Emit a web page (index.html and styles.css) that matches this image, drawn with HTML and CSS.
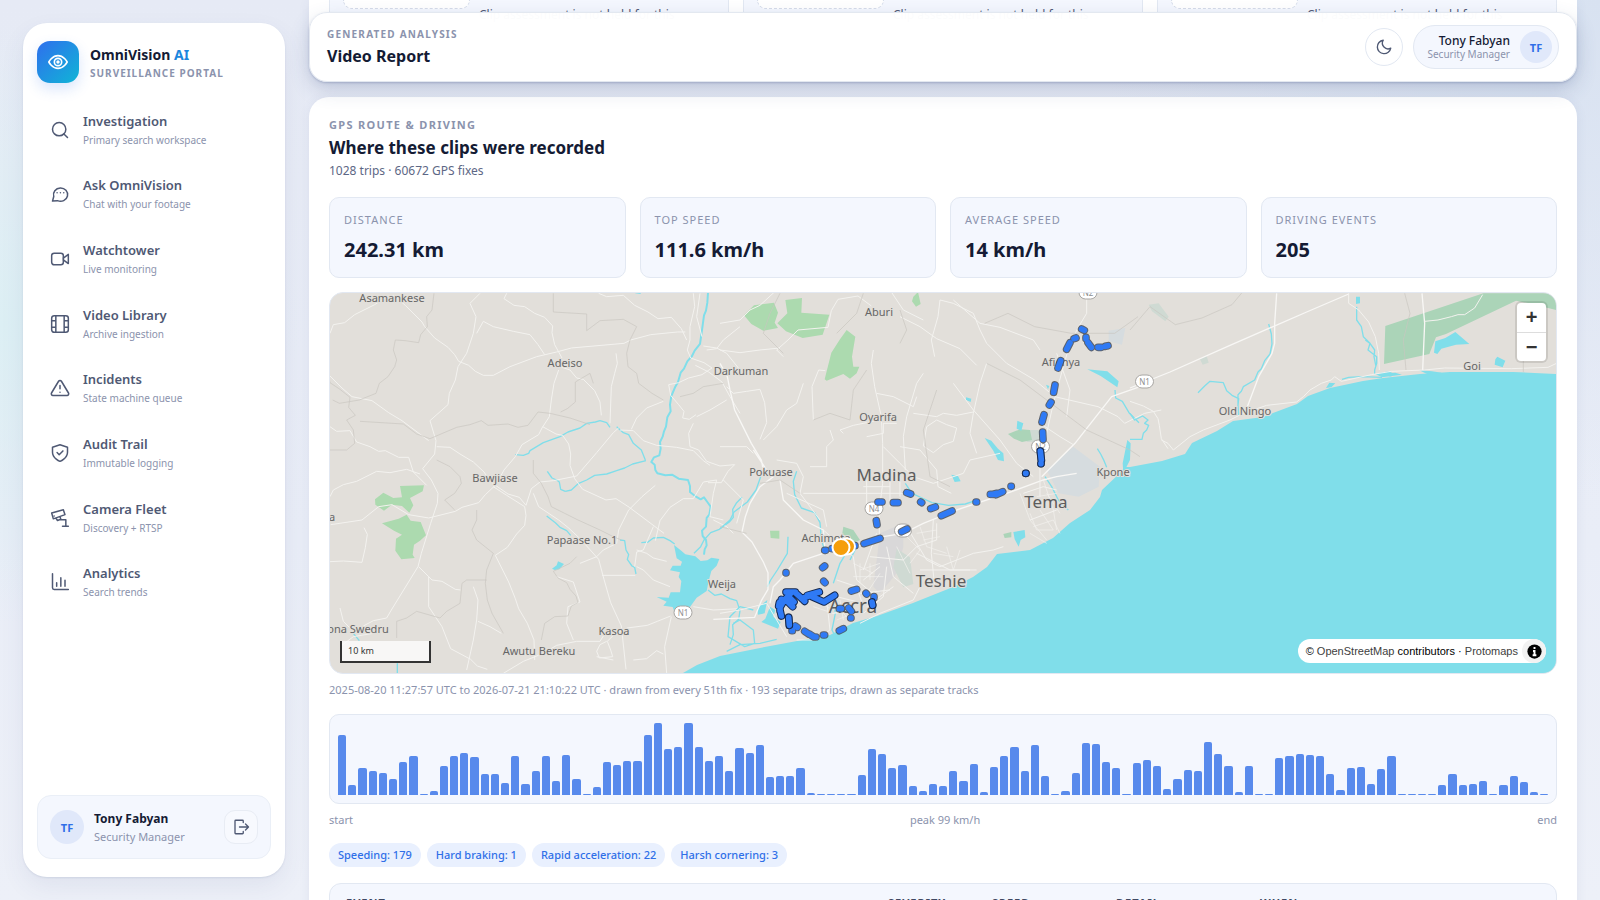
FILE: index.html
```html
<!DOCTYPE html>
<html lang="en">
<head>
<meta charset="utf-8">
<meta name="viewport" content="width=device-width, initial-scale=1">
<title>OmniVision AI – Video Report</title>
<link rel="stylesheet" href="styles.css">
</head>
<body>
<div class="shell">
  <aside class="sidebar">
    <div class="brand">
      <span class="brand-mark"><svg class="icon icon-lg" viewBox="0 0 24 24"><path d="M2 12s3.600-7 10-7 10 7 10 7-3.600 7-10 7S2 12 2 12z"/><circle cx="12" cy="12" r="4"/><circle cx="12" cy="12" r="1"/></svg></span>
      <div>
        <div class="brand-name">OmniVision <span class="brand-accent">AI</span></div>
        <div class="brand-tag">Surveillance Portal</div>
      </div>
    </div>
    <nav class="nav" aria-label="Main">
      <a class="nav-item" href="#investigation"><svg class="icon" viewBox="0 0 24 24"><circle cx="11" cy="11" r="8"/><path d="m21 21-4.300-4.300"/></svg><span><b>Investigation</b><small>Primary search workspace</small></span></a>
      <a class="nav-item" href="#ask"><svg class="icon" viewBox="0 0 24 24"><path d="M3 20.500 4.500 15A8.500 8 0 1 1 9 20z"/><path d="M8.500 10.500h.01M12.500 10.500h.01M16.500 10.500h.01"/></svg><span><b>Ask OmniVision</b><small>Chat with your footage</small></span></a>
      <a class="nav-item" href="#watchtower"><svg class="icon" viewBox="0 0 24 24"><rect x="2" y="5" width="14" height="14" rx="3"/><path d="m16 11 6-4.500v11L16 13"/></svg><span><b>Watchtower</b><small>Live monitoring</small></span></a>
      <a class="nav-item" href="#library"><svg class="icon" viewBox="0 0 24 24"><rect x="2" y="2" width="20" height="20" rx="3"/><path d="M7 2v20M17 2v20M2 8h5M2 16h5M17 8h5M17 16h5"/></svg><span><b>Video Library</b><small>Archive ingestion</small></span></a>
      <a class="nav-item" href="#incidents"><svg class="icon" viewBox="0 0 24 24"><path d="M10.300 3.900 1.800 18a2 2 0 0 0 1.700 3h17a2 2 0 0 0 1.700-3L13.700 3.900a2 2 0 0 0-3.400 0z"/><path d="M12 9v4M12 17h.01"/></svg><span><b>Incidents</b><small>State machine queue</small></span></a>
      <a class="nav-item" href="#audit"><svg class="icon" viewBox="0 0 24 24"><path d="M12 22s9-3.500 9-11V5l-9-3-9 3v6c0 7.500 9 11 9 11z"/><path d="m8.500 11.500 2.500 2.500 4.500-4.500"/></svg><span><b>Audit Trail</b><small>Immutable logging</small></span></a>
      <a class="nav-item" href="#fleet"><svg class="icon" viewBox="0 0 24 24"><path d="m2 6 14-4 2 6-14 5zM5 9.500h.01M7 12l2 3 4-1.500-1-3M13 14h6v8M15 22h7"/></svg><span><b>Camera Fleet</b><small>Discovery + RTSP</small></span></a>
      <a class="nav-item" href="#analytics"><svg class="icon" viewBox="0 0 24 24"><path d="M3 2v17a2 2 0 0 0 2 2h17M8 17v-4M13 17V7M18 17v-7"/></svg><span><b>Analytics</b><small>Search trends</small></span></a>
    </nav>
    <div class="account">
      <span class="avatar">TF</span>
      <span class="account-text"><b>Tony Fabyan</b><small>Security Manager</small></span>
      <button class="logout" type="button" aria-label="Sign out"><svg class="icon icon-sm" viewBox="0 0 24 24"><path d="M15 6V4a1 1 0 0 0-1-1H5a1 1 0 0 0-1 1v16a1 1 0 0 0 1 1h9a1 1 0 0 0 1-1v-2M10 12h12M18 8l4 4-4 4"/></svg></button>
    </div>
  </aside>

  <main class="main">
    <header class="topbar">
      <div>
        <div class="eyebrow eyebrow-sm">Generated analysis</div>
        <h1 class="page-title">Video Report</h1>
      </div>
      <div class="topbar-actions">
        <button class="theme" type="button" aria-label="Dark mode"><svg class="icon icon-sm" viewBox="0 0 24 24"><path d="M11 3a7.500 7.500 0 0 0 10 10.500A9 9 0 1 1 11 3z"/></svg></button>
        <button class="user-pill" type="button"><span class="user-text"><b>Tony Fabyan</b><small>Security Manager</small></span><span class="avatar avatar-sm">TF</span></button>
      </div>
    </header>

    <section class="card clips">
      <article class="clip"><div class="thumb"></div><p>Clip assessment is not held for this</p></article>
      <article class="clip"><div class="thumb"></div><p>Clip assessment is not held for this</p></article>
      <article class="clip"><div class="thumb"></div><p>Clip assessment is not held for this</p></article>
    </section>

    <section class="card route">
      <div class="eyebrow">GPS route &amp; driving</div>
      <h2 class="section-title">Where these clips were recorded</h2>
      <p class="section-sub">1028 trips · 60672 GPS fixes</p>

      <dl class="stats">
        <div class="stat"><dt>Distance</dt><dd>242.31 km</dd></div>
        <div class="stat"><dt>Top speed</dt><dd>111.6 km/h</dd></div>
        <div class="stat"><dt>Average speed</dt><dd>14 km/h</dd></div>
        <div class="stat"><dt>Driving events</dt><dd>205</dd></div>
      </dl>

      <div class="map">
        <svg class="map-canvas" viewBox="330 293 1226 380" preserveAspectRatio="xMidYMid slice" role="img" aria-label="Route map around Accra">
          <defs>
            <g id="track">
              <path d="M1085 147l8 4M1068 174l-6 2M1050 188l-10 20M1098 172v4M1104 188l10 14M1134 202h10M1156 199l8-2M1022 242l-8 22M1005 315l-4 22M993 367l-5 8M972 404l-6 22M968 456l1 22M961 513l3 28M963 550v1M917 580h1M874 619h-1M811 643h8l12-3M828 644l20-9M770 666h-2M696 693l-32 14M560 638l12 4M602 666l3 2M632 686l14-5M474 666h12M520 668h14M469 722l2 12M545 755l16-8M480 775l-48 16M405 797h-2M317 811h-3M336 806h6M314 858l-6 5M311 904l4 4M198 878v1M394 933l16-5M438 940l2 2M462 950v3M456 968l2 6M358 986h6M386 984l8 10M392 1014h1M370 1046l-12 6M314 1065h-4M206 1012l2 24M216 1052h1M226 1038l6 4M254 1054l12 8M268 1062l14 9h6"/>
            </g>
            <g id="city">
              <path d="M198 936h28M226 938l20 18 8 8M246 956l20-8M262 946l36-10M276 950l36 16 32-20M212 940l-20 22-12 20v10M180 990l4 18M196 958l22 22M206 950l16 16M184 958l14 4M178 968l-2 10"/>
            </g>
          </defs>

          <path class="sea" d="M683 673l14-8 23-9 20-4 20-4 37-7 33-6 23-12 24-7 36-13 40-16 20-10 14-10 10-13 33-4 23-12 17-15 20-13 10-13 2-7 18-17 5-6h5l32-6 23-7 7-11 25-12 16-10 30-4 10-4 24-9 11-8 22-8 33-7 20-3 37-4 30-2h63l43 2V673z"/>

          <g transform="translate(320 280) scale(.33333)">
            <path class="park" d="M165 658l25-20 30 16 26-2-6-34 72-2-4 18-38 20 10 22-12 22-22-20-30-4-24 18-26-18zM186 730l50-14 24-12 12 18 30 4 16 40-18 16-18 12-4 30 6 10-40 4-18-26 2-36 18-12-24-12z"/>
            <path class="pond" d="M1062 795l20 16 14 12 30 6 16 14 20-2 12-8 24 4-8 20-16 16-8 30-6 30-30 20-20 28-16 16h-30l-6-16-28-4 10-12-30-14 36 2 6-16h28l4-34-8-12 4-14-30-6 8-14h24l4-12-16-10zM696 866l14-10 4-12 18 8-14 16-14 2z"/>
            <path class="river wide" d="M1164 38l-2 30-4 24-6 14-4 30-8 56-16 20-8 16-14 16-10 22-10 12-8 28-8 14-12 28-4 26 2 20-10 18-4 28-6 14-4 16-8 16 2 20-4 20-16 6-8 14 10 8 2 16 6 10 24 6 20-2 20 12 28 4 6 18v18l18 14 14 8 10-6 10 14 10 14-4 24-8 10-2 26-12 12 2 16 10 12 2 16-6 12-2 16"/>
            <path class="river" d="M586 524l24 2 16-6 4-8 20-12 20-12 50-18 24-14 36-12 20-14 26-4 14-4 20 6 10 14M890 440l20 18 16 6 14 26 24 20 12 30M736 634l-14-6-4-22-8-6-14-6-14-20M736 634l18-4 22-20 24-10 24-14 36-4 30-10 24-8 24-12 40-10M680 708l26 20 14 14 20 10 12 14M900 780l14 2 4 28 8 14-4 14 14 20 8 4 4 20M964 788l20-2 16-12 30-2 20 10 14 10M1122 820l20-20 10-20 20-22 26-10 30-22 12-14-2-24 12-20 16-16M1164 930l20 16 20-4 26 14 20 6 10 30-4 26-18 16 2 30-10 30M232 1180v-30M100 1060l18 22M946 38l16 2"/>
            <path class="road" d="M30 160l10-26 34-6 30-24 60-30 36-24 20-4 36 30 50 50 8 14 30 34 40 28 20 22 12 20 30 12 20 18 24 12h30l50-26 80-30 60-14 44-12 158-14 20-10 60-16 80-8h24M560 40l-8 16 30 20 32 4 30 20 30 12 24 26-2 20 8 36 22 40M480 40l-30 30 18 40-8 50-20 60-26 40-8 40-18 40-4 34-54 48 18 60-4 40-36 44 26 34 20 40-2 30-20 60-28 90-10 40-80 130-14 24-40 8-30 16M30 288l36 36 30 26 60 12 50 36 40 24 80 60M470 160l20-36 30 16 60 14 50 10 24 30 20 30M30 440l20 14 40-2 20 34 40 14 26 14 20-2 40 20h30l14 44 30 30 10 10M716 270l-14 40-8 50-6 50-22 34-10 20-50 30-20 36-34 40-24 44-32 30-20 24-50 14-20 12-80 20-60-10-50-30-40 6-50 40-94 14M350 500l40 2 30 20 40 24 32 30 20 30 52 36 34 10 20 24 16-50 26-20 40-4 70-14 60-70 50-60 16-14M668 440l40 22 20 4 18 26 6 30-2 34 14 40 24 32 70 32 30-4 40 26 32 24 72 54M640 640l16 40 60 40 30 24 36 34 54 60 16 60 20 70 32 70 14 130M520 620l40 26 54 34 4 26-4 30-24 26-28 40-36 24 40 80 20 50 10 30 26 44 20 50 2 60M30 845l40-2 56 4 10-44 6-40-10-20M296 860l40 40 30 4 40 24 16 2M326 890v90l20 30 20 30 26 66 60 32 20 20 30 10M460 920l14 40-4 60-10 60-20 90M474 1024l36 16 34 20M922 1044l60-8 30-12 40-16M922 1044l-40 20-20 20 10 26 6 20-40 4-8-20 10-20 20-10M760 1080l-20-50 4-50 36-14-20-60-50-16M1110 180l-8 30 10 24 40 14 24 16-30 20-40 10-30 14-30 6 6 32 24 28 16 20-4 20 20 4 20-14M1120 430l-14 30 4 40 26 10 24 34 40 14 44-4-20 20-20 34-40 0M1260 270l-40-50-30-16-40-6M1260 400l-30-50-24-44-40-30-40-20M1120 40l4 40-14 60v40M1140 40l-10 70 16 60M1130 410l40-20 50-30M870 430l4-110 10-40 8-30-4-30M720 260l30 10 20 24 20 4 34 34 16 34 4 40M900 450l40 2 30 30 40 14 60 6 50 10 30 30 20 14M1030 364l-50 20-30 30-16 34M30 650l10-20 30-16 40-10 60-30 40 4 50-10 40 14M950 810l30 10 20 14 40 10M950 860l20 10 30 30 50 20M1000 740l-30 70-20 6-6 44M846 886h100M1120 980l60 10 80-4M1180 720l40 20 20 20M1190 600l-10 40-10 70 40 10M1160 210l30-4 20-26 50-40M550 1180l60-36 60-24 40-24 60-12h70l10-16M1040 1180l-6-80 20-90M940 1140l40-4 30-24 20 10M830 1130l50 10M780 850l50-20 20-20 40-20 6-40 30-60 40-40 40-34M1190 600l-40 6-30 50-30 0-40 26-30 40-14 60M60 1100l40-30 60-10M836 40l24 10 50-4 34 30 40 20 30 20 40-4 30 34 16 34M60 984l10 40 20 20"/>
            <path class="border" d="M342 40l-6 50-16 20 2 30-20 24-6 24-40-6-30-2-6 30 10 30-6 20-20 30-26 20-10 30-50 20-60 10-20-10M30 510h50l24-20-4-40-20-30 26-14-20-24 4-30-30-24-30-20-6-30M120 424l130 8 40 30 40 14 80-34 40-8 34-12 20 14 60-4 30 10 30-6 30-40 36 4 60 14 60 20M470 690v30l-14 30 14 30 50 40-20 50-4 40 6 50 14 40 34 60M500 900h-60l-14 10-6 60-40 24-20 20-70-20-30 20-30 10v50M700 40v56l100 6v50l40-30 70-4 40 22-20 40-10 40 4 40 26 20 6 30 40 30 34 20M640 540v40l24 30 20 40 10 30 40 20 40 20 66 30 40 20 24 10M820 310l-10-30-44 26v60l-24 20-20 10M770 830l-20 20-50 24 14 20 26 14 10 20 18 20 6 20-20 10-10 30-40 2-30 20-10 50M1080 350l40-10 30-20 60-10M350 540l40 20 30 30 4 20-20 30-30 20 30 30"/>
          </g>

          <g transform="translate(720 280) scale(.33333)">
            <path class="urban" d="M480 760l70-30v70l-20 80-50 60-20-20z"/>
            <path class="pond soft" d="M1060 500l80 60-4 60-60 30-60-10-36-70z"/>
            <path class="park soft" d="M530 806l40 26 10 80-30 10-30-60zM920 450h50v36h-50z"/>
            <path class="pond soft" d="M1166 152l50-8-10 50-40-10z"/>
            <path class="park" d="M72 106l30-30 60-8 12 30-10 30 10 16-44 8-36-20zM172 130l30-30-6-40 50-6-2 44 84 6-20 60-60 10-50-20zM380 150l26 20-10 60 4 30h18l-8 20-20 16-20-14-50 20-6-4 20-80 26-40zM580 50l14-14 8 36-14 8-12-16zM150 752h28v24l-26-2z"/>
            <path class="park cool" d="M864 462l36-14 30 2 6 30-30 6-24-10zM370 740l30 10 20 30-20 10-34-24zM850 762l24-6v16l-20 2z"/>
            <path class="pond" d="M1102 268l60 6 34 30-4 18-50-34zM794 474l20 8 20 24 16 14 2 24-18-4-14-28zM892 422l18 8-6 22-14-6zM694 584l20 4 8 16-18 2zM738 352l16 4-2 10-14-6zM880 756l34-6 2 22-14 8-6 20-12-22zM1222 480l10 10-2 50-20 40-2-30zM150 980l16 10-6 20 22 16-8 20-50-20 12-10zM112 984l30-24-8 40-20 4zM978 314l10 4-4 10z"/>
            <path class="river" d="M0 746l30-26 12-24 40-30 26-36 14-40M230 574l-10 30 4 40 20 40 40 14 16 30 4 50 12 40M204 770l-2 50-30 50-20 30-10 20M556 610l20 30 30 14 30 14 50 8 50-4 30-10M1132 506l10 16 10 20 8 20M975 590l20 30 20 40 30 30M1185 330l2 24 20 10 20 34 30 30M40 1030l20-10 40 30 4 40-30 10-50-30 6-60 30-30 40 10M340 940l6 60-10 50 10 20M20 1114l40-20 60-4 50-12M390 800l-30 50-20 60M410 800l-20 40"/>
            <path class="highway" d="M0 250l22 40 8 40 14 60 20 40 30 60 30 50 10 50M100 510l40 60M160 590l-40 30-30 50-14 40-10 46 30 30 34 60 14 32v50l-20 34-20 50-124 6M150 970l10-50 20-20 40-50 90-30 100-20 80-30 60-10 60-30 100-40 150-50 110-40 40-10 60-10M180 600l10 60 60 60 60 30 4 50M965 590l100-100 110-140 85-30"/>
            <path class="road" d="M0 130l60-10 30-30 30-14 50-46M190 230l-20-20 34-30 30-30 90-8 10-50 20-34 60-10 40 30M0 210l60 8 60-8 60-6M540 110l60 30 50 36 70 30 50 50M660 60l-6 50-20 70 10 50M660 60l40 10 60 30 20 50 20 40 60 60 84 50 60 50 130 30 60 30 20 20 60-30 50-10M800 250l-20 60-20 90-10 60 20 60M700 60l80 70 60 12 100 38 20 30M510 30l40 60 60 30M460 210l-6 40 10 70 20 90 4 80v120l-10 80v90M490 500l50 50 40 40 60 20 90-30 20-40 90-20M540 500l60 10 50 60 4 50 40 20M610 280l-20 30-30 100-10 60 6 100M580 400l70 10 20-10 40 6 50-10M250 640h310M370 460l-10-10 40-14 70-14M280 420l-4-100 20-50 20 2M700 310l60 80 80 90 50 70 50 40M1010 220l40 110-10 80M1100 50v50l-24 40-26 50-20 70-30 110-20 90-20 100v90M960 430l60 40 40 24M20 320l20 20 40-6 40-6 14 40 6 60-20 50M0 500h80l20 20M170 540l60 10 20 40-10 50 60 80M270 560h50v-60l20-20-10-30M620 440l30-20 30 14 30 10-10 40-30 10-30 24-30-20zM450 830l100 10 40-40 60-20v-50M640 720l-6 100 10 100M560 740l60 100 40 20 100-40 60-10 30-10M600 920l-20 40-100 40-60 30M500 860l-10 90-60 50M400 830l10 70 60 50M320 960l10 90-40 30h-60M0 1000l60-10 80-20 30 50 30 50M130 480l40-40 30-50 30-20 20-60M200 640l110 50 10 50M440 600v90M310 750l90 80M910 640l60-20 40 10M930 720l80-30M600 870h150M590 820l100 50h80M430 900l50-40M420 940l90-10M440 980l80-60M350 900l60 20 20 60M350 950l80 20M340 1000l60-20M500 800l20 90 60 50M470 760l-40 110M510 620h-80M510 580v100M540 590v60M470 340l50 10 60 30 10-30M440 470l50-10v-30h40M10 600l60 60-20 70"/>
            <path class="road thin" d="M900 640l30 80 50 60M970 600l30 90 10 60M930 700l20 50h50M940 740l60-20 20 40M960 690l40 60M930 760l50 30M980 640l40 60M950 650l60-10M400 850l60 30M420 870l60-20M400 890h90M420 850v60M450 850v50M480 880l-40 60M340 970l40 40M360 960l10 60M330 1000h60M350 1020l50-20M300 970l40 20M280 980l60 20M530 800l40 80M560 770l40 40-30 40M600 740l20 60 60 20M590 760l60-10M610 780l50-10M640 820l60 10M680 800l20 70M720 810l-20 60"/>
            <path class="border" d="M800 250l100 50 120 90 80 60 130 60 30 20M794 130l70-30 80 40 110 20h130l70-50M280 420l50-20 60 20 10-90 40-60M650 330l-40 120 20 140 60 30M0 740l80 20M540 90l20 60-20 40M180 40l-30 60-20 60 60 60M240 640l-60-40-60 10M430 40l-20 60-60 60"/>
          </g>

          <g transform="translate(1130 280) scale(.33333)">
            <path class="park cool" d="M766 138l294-98h218v50l-80-20-40-8-210 100-30 10-20 50-136 30z"/>
            <path class="pond" d="M916 184l30-10 30-18 42 36-40 2-44 12-12 16-10-4zM1096 238l6-8 24 12-8 20-24-8zM678 50h12v20l-12 2zM745 280l30-6 25 10-20 6zM866 270l40 4 30 4-40 6zM598 308l18 2-12 12-16 2zM736 282l60-4 20 6-60 8z"/>
            <path class="park cool soft" d="M56 74l30-4 30 40-10 14-40-30zM210 238l20-10 6 20-18 6z"/>
            <path class="river" d="M416 132l8 30 2 30-6 30-16 20-10 24-10 10-10 24-34 20-6 14-10 10v30M204 338l20-20 16-14 40 4 10 24 16 14 20 10-2 20 2 30M680 80v40l14 20 6 30 20 20-6 20 26 20v20l-6 20v12M706 180l14 10 14 20-2 20 6 30M0 400l14 20 24-12 16 12-10 10 12 6-6 14-10 10-4 18H0M636 298l20-6 40-2 60 2"/>
            <path class="highway" d="M0 324l120-48 180-80 230-100 126-54M440 40l-6 90v60l-8 30-40 70-34 90M876 40l8 90-6 140"/>
            <path class="road" d="M656 40v30l30 20 30 36 20 44 10 50 2 50M884 124l40-4 40-10 20-6h20l30-20 24-40M0 364l40 14 30 16 14 22 4 20 6 40 20 30M94 480l20 10 16 20 50-40 40-20 80-30 40-20 70-24 90-10 20-16 20-20 34-20 30-10 10-10 20 14 90-20 60-10 100-4 60-6 200 2 110-4 30-14 60 10"/>
            <path class="border" d="M824 40l16 60-20 80 8 90M1180 240v36M0 150l60-70 76 54 80-20 90-40 30-36"/>
          </g>

          <g class="shields">
            <rect x="674" y="606" width="18" height="13" rx="6.500"/><text x="683" y="615.500">N1</text>
            <rect x="1079" y="286" width="18" height="13" rx="6.500"/><text x="1088" y="296">N2</text>
            <rect x="1135.500" y="375" width="18" height="13" rx="6.500"/><text x="1144.500" y="385">N1</text>
            <rect x="1031.500" y="440" width="18" height="13" rx="6.500"/><text x="1040.500" y="450">N2</text>
            <rect x="865" y="502" width="18" height="13" rx="6.500"/><text x="874" y="512">N4</text>
            <rect x="894.500" y="524" width="17" height="13" rx="6.500"/>
          </g>
          <g class="labels">
            <text x="392" y="302">Asamankese</text><text x="565" y="367">Adeiso</text><text x="741" y="375">Darkuman</text>
            <text x="495" y="482">Bawjiase</text><text x="582" y="544">Papaase No.1</text><text x="722" y="588">Weija</text>
            <text x="614" y="635">Kasoa</text><text x="539" y="655">Awutu Bereku</text><text x="358" y="633">ona Swedru</text><text x="332" y="521">a</text>
            <text x="879" y="316">Aburi</text><text x="878" y="421">Oyarifa</text><text x="771" y="476">Pokuase</text><text x="826" y="542">Achimota</text>
            <text x="1061" y="366">Afienya</text><text x="1113" y="476">Kpone</text><text x="1245" y="415">Old Ningo</text><text x="1472" y="370">Goi</text>
            <g class="city-labels"><text x="886.500" y="481">Madina</text><text x="1046" y="508">Tema</text><text x="941" y="587">Teshie</text><text class="capital" x="853" y="613">Accra</text></g>
          </g>
          <g transform="translate(720 280) scale(.33333)">
            <use href="#track" class="casing"/><use href="#track" class="trace"/>
            <use href="#city" class="casing dense"/><use href="#city" class="trace"/>
            <path class="casing dense" d="M961 513l3 28M963 550v1M917 580h1M456 966l2 10M206 1012l2 24"/><path class="trace" d="M961 513l3 28M963 550v1M917 580h1M456 966l2 10M206 1012l2 24"/>
          </g>
          <g class="pin"><circle cx="847" cy="546.500" r="8"/><circle cx="841" cy="547.500" r="8.500"/></g>
        </svg>
        <div class="zoom-ctl"><button type="button" aria-label="Zoom in">+</button><button type="button" aria-label="Zoom out">−</button></div>
        <div class="scale">10 km</div>
        <div class="attribution">© <a href="#osm">OpenStreetMap</a> contributors · <a href="#protomaps">Protomaps</a><span class="info"><svg viewBox="0 0 20 20"><circle cx="10" cy="10" r="9.500"/><path class="info-mark" d="M10 4v2.500M8 9.200h2v5.300M7.500 15h5"/></svg></span></div>
      </div>
      <p class="note">2025-08-20 11:27:57 UTC to 2026-07-21 21:10:22 UTC · drawn from every 51th fix · 193 separate trips, drawn as separate tracks</p>

      <div class="speed" id="speed" role="img" aria-label="Speed over time"></div>
      <div class="speed-axis"><span>start</span><span>peak 99 km/h</span><span>end</span></div>

      <ul class="chips"><li>Speeding: 179</li><li>Hard braking: 1</li><li>Rapid acceleration: 22</li><li>Harsh cornering: 3</li></ul>

      <div class="table-wrap">
        <table>
          <thead><tr><th class="c-event">Event</th><th class="c-sev">Severity</th><th class="c-speed">Speed</th><th class="c-detail">Detail</th><th>When</th></tr></thead>
        </table>
      </div>
    </section>
  </main>
</div>
<script src="app.js"></script>
</body>
</html>
```
FILE: styles.css
```css
* { box-sizing: border-box; }

:root {
  --ink: #141b34;
  --ink-2: #4f5974;
  --muted: #8b93ad;
  --line: #e2e8f2;
  --tint: #f4f7fe;
  --blue: #2f6fe8;
}

body {
  margin: 0;
  height: 100vh;
  overflow: hidden;
  font-family: "Noto Sans", "Liberation Sans", sans-serif;
  font-size: 12px;
  color: var(--ink);
  background:
    radial-gradient(circle at 0 36%, #dceff4 0, rgba(220, 239, 244, 0) 300px),
    radial-gradient(circle at 100% 0, #d8e2f1 0, rgba(216, 226, 241, 0) 500px),
    linear-gradient(180deg, #e6eaf5, #e9edf7 60%, #edf0f8);
}

h1, h2, p, dl, dd, ul { margin: 0; padding: 0; }
button { font: inherit; color: inherit; padding: 0; cursor: pointer; }
a { color: inherit; text-decoration: none; }
b, small { display: block; }

.icon {
  width: 20px;
  height: 20px;
  flex: none;
  fill: none;
  stroke: currentColor;
  stroke-width: 1.8;
  stroke-linecap: round;
  stroke-linejoin: round;
}
.icon-lg { width: 22px; height: 22px; }
.icon-sm { width: 18px; height: 18px; }

.shell {
  display: grid;
  grid-template-columns: 262px minmax(0, 1fr);
  gap: 24px;
  height: 100vh;
  padding: 0 23px;
}

.sidebar {
  display: flex;
  flex-direction: column;
  margin: 23px 0;
  padding: 18px 14px;
  border-radius: 24px;
  background: #fff;
  box-shadow: 0 10px 24px rgba(60, 80, 130, .08), 0 1px 2px rgba(60, 80, 130, .12);
}

.brand { display: flex; align-items: center; gap: 11px; }
.brand-mark {
  display: grid;
  place-items: center;
  width: 42px;
  height: 42px;
  border-radius: 13px;
  color: #fff;
  background: linear-gradient(135deg, #2f6fed, #10b5d6);
  box-shadow: 0 6px 14px rgba(47, 111, 237, .18);
}
.brand-name { padding-top: 2px; font-size: 14px; line-height: 20px; font-weight: 700; }
.brand-accent { color: #1c86dd; }
.brand-tag {
  font-size: 10px;
  line-height: 16px;
  font-weight: 700;
  letter-spacing: 1px;
  text-transform: uppercase;
  color: var(--muted);
}

.nav {
  display: flex;
  flex-direction: column;
  justify-content: space-between;
  height: 510px;
  margin-top: 18px;
}
.nav-item {
  display: flex;
  align-items: center;
  gap: 13px;
  height: 57px;
  padding: 0 13px;
  color: var(--ink-2);
}
.nav-item b { font-size: 13px; line-height: 20px; font-weight: 600; }
.nav-item small { font-size: 10px; line-height: 18px; color: var(--muted); }

.account {
  display: flex;
  align-items: center;
  gap: 10px;
  margin-top: auto;
  padding: 12px;
  border: 1px solid #eaeff7;
  border-radius: 14px;
  background: var(--tint);
}
.avatar {
  display: grid;
  place-items: center;
  flex: none;
  width: 34px;
  height: 34px;
  border-radius: 50%;
  background: #e0e8fa;
  color: var(--blue);
  font-size: 11px;
  font-weight: 700;
}
.avatar-sm { width: 32px; height: 32px; }
.account-text { flex: 1; }
.account-text b { padding-top: 2px; font-size: 12px; line-height: 18px; }
.account-text small { font-size: 11px; line-height: 18px; color: var(--muted); }
.logout {
  display: grid;
  place-items: center;
  width: 34px;
  height: 34px;
  border: 1px solid #e8ecf4;
  border-radius: 11px;
  background: #f7f9fe;
  color: var(--ink-2);
}

.main {
  position: relative;
  display: flex;
  flex-direction: column;
  gap: 16px;
  min-width: 0;
  height: 100vh;
}

.topbar {
  position: absolute;
  z-index: 2;
  inset: 12px 0 auto;
  display: flex;
  align-items: center;
  justify-content: space-between;
  height: 70px;
  padding: 0 17px;
  border: 1px solid #e3e8f0;
  border-radius: 18px;
  background: rgba(255, 255, 255, .98);
  box-shadow: 0 8px 20px rgba(60, 80, 130, .2), 0 1px 2px rgba(60, 80, 130, .25);
}
.eyebrow {
  font-size: 11px;
  line-height: 16px;
  font-weight: 700;
  letter-spacing: .12em;
  text-transform: uppercase;
  color: var(--muted);
}
.eyebrow-sm { font-size: 10px; }
.page-title { padding-top: 2px; font-size: 16px; line-height: 24px; font-weight: 700; }

.topbar-actions { display: flex; align-items: center; gap: 10px; }
.theme {
  display: grid;
  place-items: center;
  width: 38px;
  height: 38px;
  border: 1px solid var(--line);
  border-radius: 50%;
  background: #fff;
  color: var(--ink-2);
}
.user-pill {
  display: flex;
  align-items: center;
  gap: 10px;
  height: 44px;
  padding: 0 6px 0 13px;
  border: 1px solid var(--line);
  border-radius: 22px;
  background: var(--tint);
  text-align: right;
}
.user-text b { font-size: 12px; line-height: 15px; font-weight: 500; }
.user-text small { font-size: 10px; line-height: 13px; color: var(--muted); }

.card {
  padding: 20px;
  background: #fff;
  box-shadow: 0 2px 12px rgba(60, 80, 130, .08);
}

.clips {
  display: grid;
  grid-template-columns: repeat(3, 1fr);
  gap: 14px;
  flex: none;
  height: 81px;
  padding-top: 0;
  border-radius: 0 0 20px 20px;
}
.clip {
  display: flex;
  gap: 9px;
  padding: 0 13px;
  border: 1px solid var(--line);
  border-top: 0;
  background: var(--tint);
}
.thumb {
  width: 127px;
  height: 9px;
  border: 1px dashed #d5dce9;
  border-top: 0;
  border-radius: 0 0 10px 10px;
  background: #fff;
}
.clip p { padding-top: 6px; font-size: 12px; line-height: 18px; color: var(--ink-2); }

.route {
  display: flex;
  flex-direction: column;
  flex: 1 0 auto;
  border-radius: 20px 20px 0 0;
}
.section-title { font-size: 17px; line-height: 26px; margin-top: 2px; font-weight: 700; }
.section-sub { font-size: 12px; line-height: 18px; margin-top: 1px; color: #5d6785; }

.stats { display: grid; grid-template-columns: repeat(4, 1fr); gap: 14px; margin-top: 17px; }
.stat {
  height: 81px;
  padding: 13px 14px;
  border: 1px solid var(--line);
  border-radius: 10px;
  background: var(--tint);
}
.stat dt {
  font-size: 11px;
  line-height: 18px;
  letter-spacing: 1px;
  text-transform: uppercase;
  color: var(--muted);
}
.stat dd { margin-top: 7px; font-size: 20px; line-height: 28px; font-weight: 700; }

.map {
  position: relative;
  height: 382px;
  margin-top: 14px;
  border: 1px solid var(--line);
  border-radius: 14px;
  overflow: hidden;
  background: #e2dfda;
}
.map-canvas { display: block; width: 100%; height: 100%; fill: none; }
.sea, .pond { fill: #80deea; }
.pond.soft { fill: #d6dcdf; }
.park { fill: #acdaaf; }
.park.cool { fill: #abd4b8; }
.park.soft { fill: #cfdad3; }
.urban { fill: #d9d8d9; }
.river { stroke: #80deea; stroke-width: 4; stroke-linejoin: round; }
.river.wide { stroke-width: 6; }
.road { stroke: #f3f2ef; stroke-width: 3; stroke-linejoin: round; }
.road.thin { stroke-width: 2; }
.highway { stroke: #f8f7f5; stroke-width: 4; stroke-linejoin: round; }
.border { stroke: #c8c5c0; stroke-width: 2; }
.casing { stroke: #3a4250; stroke-width: 23; stroke-linecap: round; stroke-linejoin: round; opacity: .8; }
.casing.dense { stroke: #14284f; opacity: 1; }
.trace { stroke: #2f7af5; stroke-width: 17; stroke-linecap: round; stroke-linejoin: round; }
.shields rect { fill: #fff; stroke: #a9a7a4; stroke-width: 1; }
.shields text { fill: #8f8f8f; font-size: 8px; text-anchor: middle; }
.labels text {
  fill: #666;
  stroke: #e2dfda;
  stroke-width: 2;
  paint-order: stroke;
  font-size: 11px;
  text-anchor: middle;
}
.labels .city-labels text { font-size: 17px; fill: #5c5c5c; }
.labels .city-labels .capital { font-size: 19px; }
.pin circle { fill: #f59e0b; stroke: #fff; stroke-width: 2; }

.zoom-ctl {
  position: absolute;
  top: 10px;
  right: 10px;
  width: 29px;
  border-radius: 4px;
  background: #fff;
  box-shadow: 0 0 0 2px rgba(0, 0, 0, .1);
}
.zoom-ctl button {
  display: block;
  width: 29px;
  height: 29px;
  border: 0;
  background: none;
  color: #333;
  font: 700 20px/29px "Liberation Sans", sans-serif;
}
.zoom-ctl button + button { border-top: 1px solid #ddd; }
.scale {
  position: absolute;
  left: 10px;
  bottom: 10px;
  width: 91px;
  height: 22px;
  padding: 0 6px;
  border: 2px solid #333;
  border-top: 0;
  background: rgba(255, 255, 255, .75);
  color: #333;
  font-size: 9px;
  line-height: 19px;
}
.attribution {
  position: absolute;
  right: 10px;
  bottom: 10px;
  height: 24px;
  padding: 0 28px 0 8px;
  border-radius: 12px;
  background: #fff;
  color: #000;
  font: 11px/24px "Liberation Sans", sans-serif;
}
.attribution a { color: #404040; }
.info {
  position: absolute;
  inset: 0 0 0 auto;
  display: grid;
  place-items: center;
  width: 24px;
  border-radius: 12px;
  background: #f2f2f2;
}
.info svg { width: 15px; height: 15px; }
.info-mark { fill: none; stroke: #fff; stroke-width: 2.6; }

.note { margin-top: 7px; font-size: 11px; line-height: 18px; color: var(--muted); }

.speed {
  display: flex;
  align-items: flex-end;
  gap: 2px;
  height: 90px;
  margin-top: 15px;
  padding: 8px;
  border: 1px solid var(--line);
  border-radius: 10px;
  background: var(--tint);
}
.speed i { flex: 1; border-radius: 2px 2px 0 0; background: #588aec; }
.speed-axis {
  display: flex;
  justify-content: space-between;
  margin-top: 7px;
  font-size: 11px;
  line-height: 18px;
  color: var(--muted);
}

.chips { display: flex; gap: 6px; margin-top: 14px; list-style: none; }
.chips li {
  padding: 0 9px;
  border-radius: 12px;
  background: #e9f0fe;
  color: var(--blue);
  font-size: 11px;
  line-height: 24px;
  font-weight: 500;
}

.table-wrap {
  margin-top: 16px;
  border: 1px solid var(--line);
  border-radius: 12px;
  background: var(--tint);
}
table { width: 100%; table-layout: fixed; border-collapse: collapse; }
th {
  padding: 10px 16px;
  font-size: 11px;
  line-height: 18px;
  letter-spacing: 1px;
  text-align: left;
  text-transform: uppercase;
  color: #3f4862;
}
.c-event { width: 542px; }
.c-sev { width: 104px; }
.c-speed { width: 124px; }
.c-detail { width: 144px; }
```
FILE: app.js
```js
const speeds = [
  60, 10, 27, 24, 22, 16, 33, 39, 1, 4, 29, 39, 42, 38, 21, 21, 12, 39, 11, 24,
  39, 14, 40, 16, 1, 8, 33, 30, 34, 34, 60, 72, 46, 48, 72, 48, 34, 39, 24, 47,
  42, 50, 18, 19, 19, 27, 2, 1, 1, 1, 1, 20, 46, 41, 27, 30, 9, 4, 11, 9,
  24, 14, 31, 3, 28, 39, 48, 24, 50, 19, 1, 4, 22, 52, 51, 33, 27, 1, 32, 35,
  29, 6, 16, 25, 24, 53, 41, 29, 3, 29, 1, 1, 37, 39, 41, 40, 39, 21, 5, 27,
  28, 11, 26, 39, 1, 1, 1, 1, 10, 21, 10, 11, 14, 1, 10, 19, 13, 3, 1
];

const chart = document.getElementById("speed");
for (const v of speeds) {
  const bar = document.createElement("i");
  bar.style.height = v + "px";
  chart.append(bar);
}
```
